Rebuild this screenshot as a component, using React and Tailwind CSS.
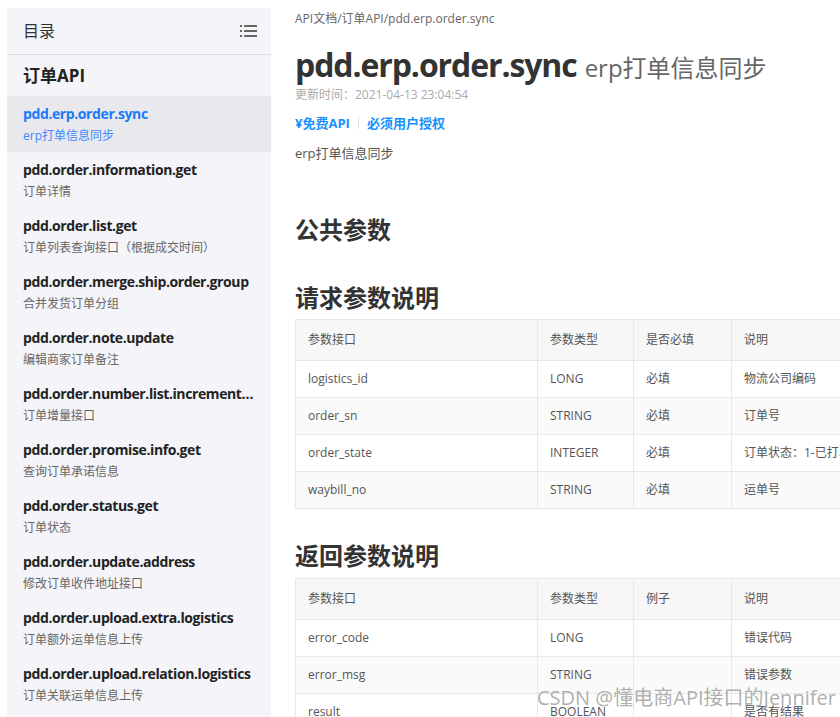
import React from 'react'

const apis = [
  ['pdd.erp.order.sync', 'erp打单信息同步'],
  ['pdd.order.information.get', '订单详情'],
  ['pdd.order.list.get', '订单列表查询接口（根据成交时间）'],
  ['pdd.order.merge.ship.order.group', '合并发货订单分组'],
  ['pdd.order.note.update', '编辑商家订单备注'],
  ['pdd.order.number.list.increment.get', '订单增量接口'],
  ['pdd.order.promise.info.get', '查询订单承诺信息'],
  ['pdd.order.status.get', '订单状态'],
  ['pdd.order.update.address', '修改订单收件地址接口'],
  ['pdd.order.upload.extra.logistics', '订单额外运单信息上传'],
  ['pdd.order.upload.relation.logistics', '订单关联运单信息上传'],
]

const requestRows = [
  ['logistics_id', 'LONG', '必填', '物流公司编码'],
  ['order_sn', 'STRING', '必填', '订单号'],
  ['order_state', 'INTEGER', '必填', '订单状态：1-已打单，2-已发货'],
  ['waybill_no', 'STRING', '必填', '运单号'],
]

const responseRows = [
  ['error_code', 'LONG', '', '错误代码'],
  ['error_msg', 'STRING', '', '错误参数'],
  ['result', 'BOOLEAN', '', '是否有结果'],
]

function ParamTable({ head, rows }) {
  return (
    <table className="w-[640px] border-collapse text-[12px] text-[#555] table-fixed">
      <colgroup>
        <col className="w-[242px]" />
        <col className="w-[96px]" />
        <col className="w-[98px]" />
        <col />
      </colgroup>
      <thead>
        <tr className="bg-[#f7f7f7] h-[41px]">
          {head.map((h) => (
            <th key={h} className="border border-[#e8e8e8] px-[12px] text-left font-normal">{h}</th>
          ))}
        </tr>
      </thead>
      <tbody>
        {rows.map((r, i) => (
          <tr key={r[0]} className={i % 2 === 1 ? 'bg-[#fafafa] h-[37px]' : 'bg-white h-[37px]'}>
            {r.map((c, j) => (
              <td key={j} className="border border-[#e8e8e8] px-[12px] whitespace-nowrap overflow-hidden">{c}</td>
            ))}
          </tr>
        ))}
      </tbody>
    </table>
  )
}

export default function App() {
  return (
    <div
      className="relative w-[840px] h-[717px] overflow-hidden bg-white flex"
      style={{ fontFamily: '"Open Sans", "Noto Sans CJK SC", sans-serif' }}
    >
      <aside className="ml-[7px] mt-[8px] w-[264px] shrink-0 bg-[#f4f4f9] flex flex-col">
        <div className="h-[47px] flex items-center justify-between pl-[16px] pr-[14px] border-b border-[#dcdce0]">
          <span className="text-[16px] text-[#333]">目录</span>
          <svg width="17" height="12" viewBox="0 0 17 12" fill="#666">
            <rect x="0" y="0" width="2" height="2" />
            <rect x="4" y="0" width="13" height="2" />
            <rect x="0" y="5" width="2" height="2" />
            <rect x="4" y="5" width="13" height="2" />
            <rect x="0" y="10" width="2" height="2" />
            <rect x="4" y="10" width="13" height="2" />
          </svg>
        </div>
        <div className="h-[41px] flex items-center pl-[16px] text-[17px] font-bold text-[#222]">订单API</div>
        {apis.map(([name, desc], i) => (
          <div
            key={name}
            className={
              i === 0
                ? 'h-[56px] pl-[16px] pr-[16px] pt-[8px] flex flex-col bg-[#e8e8ed]'
                : 'h-[56px] pl-[16px] pr-[16px] pt-[8px] flex flex-col'
            }
          >
            <div className={i === 0 ? 'text-[14px] font-bold text-[#1a7af8] truncate tracking-[-0.4px] leading-[20px]' : 'text-[14px] font-bold text-[#222] truncate tracking-[-0.4px] leading-[20px]'}>
              {name}
            </div>
            <div className={i === 0 ? 'mt-[2px] text-[12px] text-[#3d8bfd] leading-[20px]' : 'mt-[2px] text-[12px] text-[#666] leading-[20px]'}>
              {desc}
            </div>
          </div>
        ))}
      </aside>

      <main className="ml-[24px] flex-1 min-w-0">
        <div className="mt-[11px] text-[12px] text-[#666] leading-[16px]">API文档/订单API/pdd.erp.order.sync</div>
        <div className="mt-[18px] flex items-baseline leading-[40px] whitespace-nowrap">
          <span className="text-[32px] font-bold text-[#333] tracking-[-1.1px]">pdd.erp.order.sync</span>
          <span className="ml-[8px] text-[24px] text-[#666]">erp打单信息同步</span>
        </div>
        <div className="mt-[-1px] text-[12px] text-[#aaa] leading-[16px]">更新时间：2021-04-13 23:04:54</div>
        <div className="mt-[10px] flex items-center text-[13px] font-bold text-[#1890ff] leading-[20px]">
          <span>¥免费API</span>
          <span className="mx-[8px] w-px h-[12px] bg-[#ddd]" />
          <span>必须用户授权</span>
        </div>
        <div className="mt-[10px] text-[13px] text-[#555] leading-[20px]">erp打单信息同步</div>
        <h2 className="mt-[51px] text-[24px] font-bold text-[#333] leading-[32px]">公共参数</h2>
        <h2 className="mt-[36px] text-[24px] font-bold text-[#333] leading-[32px]">请求参数说明</h2>
        <div className="mt-[5px]">
          <ParamTable head={['参数接口', '参数类型', '是否必填', '说明']} rows={requestRows} />
        </div>
        <h2 className="mt-[31px] text-[24px] font-bold text-[#333] leading-[32px]">返回参数说明</h2>
        <div className="mt-[6px]">
          <ParamTable head={['参数接口', '参数类型', '例子', '说明']} rows={responseRows} />
        </div>
      </main>

      <div className="absolute left-[537px] top-[684px] text-[20px] text-[#9a9a9a]/80 whitespace-nowrap leading-[28px]">
        CSDN @懂电商API接口的Jennifer
      </div>
    </div>
  )
}
